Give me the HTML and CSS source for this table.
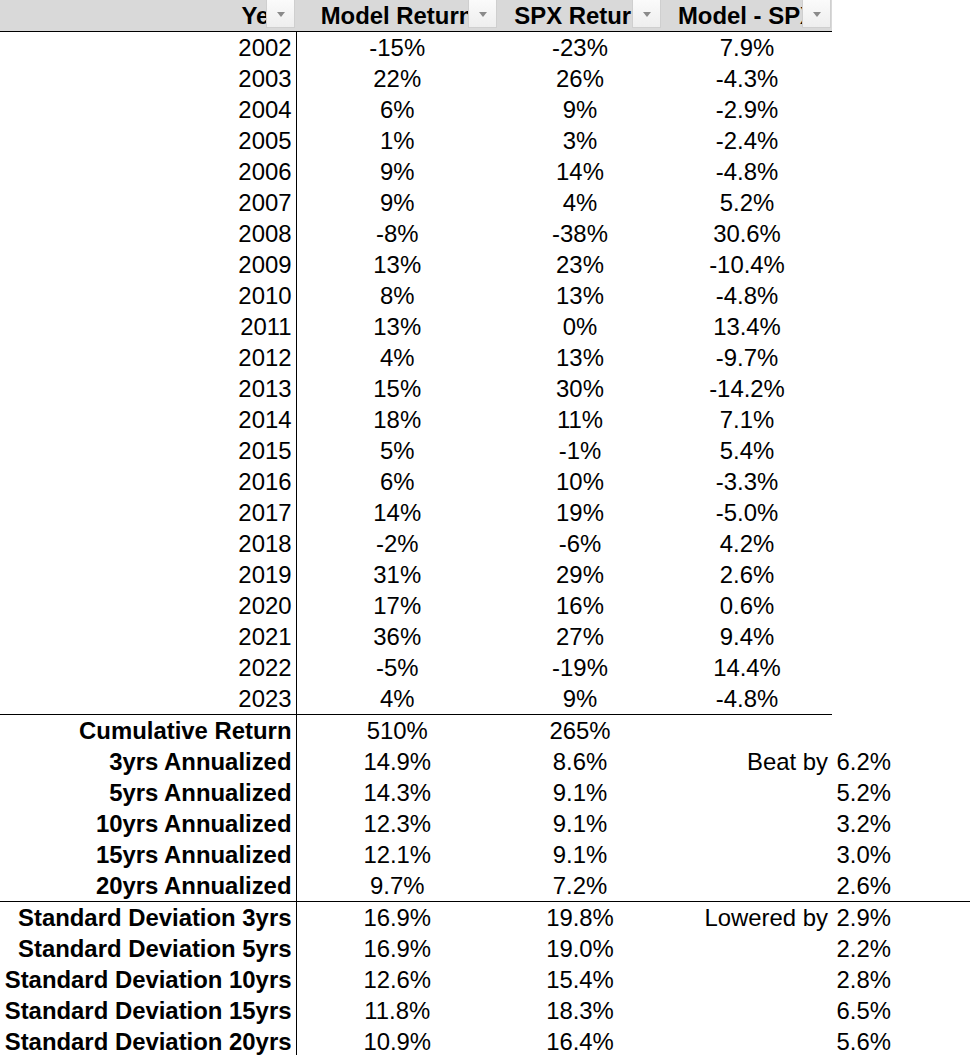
FILE: index.html
```html
<!DOCTYPE html>
<html lang="en">
<head>
  <meta charset="UTF-8">
  <title>Model vs SPX Returns</title>
  <link rel="stylesheet" href="styles.css">
</head>
<body>

<table class="sheet">
  <colgroup>
    <col class="c-a"><col class="c-b"><col class="c-c"><col class="c-d"><col class="c-e"><col class="c-f">
  </colgroup>
  <thead>
    <tr>
      <th class="h-year"><span class="htext">Year</span><span class="drop"></span></th>
      <th><span class="htext">Model Return</span><span class="drop"></span></th>
      <th><span class="htext">SPX Return</span><span class="drop"></span></th>
      <th><span class="htext">Model - SPX</span><span class="drop"></span></th>
      <th class="blank"></th>
      <th class="blank"></th>
    </tr>
  </thead>
  <tbody id="years"></tbody>
  <tbody class="summary">
    <tr><td class="label">Cumulative Return</td><td>510%</td><td>265%</td><td class="r"></td><td class="r"></td><td></td></tr>
    <tr><td class="label">3yrs Annualized</td><td>14.9%</td><td>8.6%</td><td class="r">Beat by</td><td class="r">6.2%</td><td></td></tr>
    <tr><td class="label">5yrs Annualized</td><td>14.3%</td><td>9.1%</td><td class="r"></td><td class="r">5.2%</td><td></td></tr>
    <tr><td class="label">10yrs Annualized</td><td>12.3%</td><td>9.1%</td><td class="r"></td><td class="r">3.2%</td><td></td></tr>
    <tr><td class="label">15yrs Annualized</td><td>12.1%</td><td>9.1%</td><td class="r"></td><td class="r">3.0%</td><td></td></tr>
    <tr class="last"><td class="label">20yrs Annualized</td><td>9.7%</td><td>7.2%</td><td class="r"></td><td class="r">2.6%</td><td></td></tr>
  </tbody>
  <tbody class="summary">
    <tr><td class="label">Standard Deviation 3yrs</td><td>16.9%</td><td>19.8%</td><td class="r">Lowered by</td><td class="r">2.9%</td><td></td></tr>
    <tr><td class="label">Standard Deviation 5yrs</td><td>16.9%</td><td>19.0%</td><td class="r"></td><td class="r">2.2%</td><td></td></tr>
    <tr><td class="label">Standard Deviation 10yrs</td><td>12.6%</td><td>15.4%</td><td class="r"></td><td class="r">2.8%</td><td></td></tr>
    <tr><td class="label">Standard Deviation 15yrs</td><td>11.8%</td><td>18.3%</td><td class="r"></td><td class="r">6.5%</td><td></td></tr>
    <tr><td class="label">Standard Deviation 20yrs</td><td>10.9%</td><td>16.4%</td><td class="r"></td><td class="r">5.6%</td><td></td></tr>
  </tbody>
</table>

<script>
  const rows = [
    [2002, "-15%", "-23%", "7.9%"],
    [2003, "22%", "26%", "-4.3%"],
    [2004, "6%", "9%", "-2.9%"],
    [2005, "1%", "3%", "-2.4%"],
    [2006, "9%", "14%", "-4.8%"],
    [2007, "9%", "4%", "5.2%"],
    [2008, "-8%", "-38%", "30.6%"],
    [2009, "13%", "23%", "-10.4%"],
    [2010, "8%", "13%", "-4.8%"],
    [2011, "13%", "0%", "13.4%"],
    [2012, "4%", "13%", "-9.7%"],
    [2013, "15%", "30%", "-14.2%"],
    [2014, "18%", "11%", "7.1%"],
    [2015, "5%", "-1%", "5.4%"],
    [2016, "6%", "10%", "-3.3%"],
    [2017, "14%", "19%", "-5.0%"],
    [2018, "-2%", "-6%", "4.2%"],
    [2019, "31%", "29%", "2.6%"],
    [2020, "17%", "16%", "0.6%"],
    [2021, "36%", "27%", "9.4%"],
    [2022, "-5%", "-19%", "14.4%"],
    [2023, "4%", "9%", "-4.8%"]
  ];

  const body = document.getElementById("years");
  rows.forEach(function(r, i) {
    const tr = document.createElement("tr");
    if (i === rows.length - 1) tr.className = "last";
    tr.innerHTML =
      '<td class="year">' + r[0] + '</td>' +
      '<td>' + r[1] + '</td>' +
      '<td>' + r[2] + '</td>' +
      '<td>' + r[3] + '</td>' +
      '<td class="out"></td><td class="out"></td>';
    body.appendChild(tr);
  });
</script>

</body>
</html>
```

FILE: styles.css
```css
body {
  margin: 0;
  padding: 0;
  background: #fff;
  color: #000;
  font-family: "Liberation Sans", Arial, sans-serif;
}
.sheet {
  border-collapse: collapse;
  table-layout: fixed;
  width: 970px;
  font-size: 23.9px;
}
.c-a { width: 296px; }
.c-b { width: 202px; }
.c-c { width: 164px; }
.c-d { width: 170px; }
.c-e { width: 63px; }
.c-f { width: 75px; }

th, td {
  height: 30px;
  padding: 1px 4px 0;
  line-height: 30px;
  white-space: nowrap;
  text-align: center;
}

/* header with filter buttons */
thead th {
  position: relative;
  overflow: hidden;
  background: #d9d9d9;
  font-weight: bold;
  border-bottom: 1px solid #000;
  padding: 1px 0 0;
}
thead th.blank {
  background: #fff;
  border-bottom: none;
}
.h-year { text-align: right; }
.h-year .htext { padding-right: 4px; }
.drop {
  position: absolute;
  top: 0;
  right: 1px;
  width: 29px;
  height: 28px;
  box-sizing: border-box;
  background: linear-gradient(#fbfbfb, #eeeeee);
  border: 1px solid #cfcfcf;
  border-top: none;
}
.drop::after {
  content: "";
  position: absolute;
  left: 10px;
  top: 12px;
  border-left: 4px solid transparent;
  border-right: 4px solid transparent;
  border-top: 5px solid #8a8a8a;
}

/* body cells */
tbody td:first-child {
  border-right: 1px solid #000;
  text-align: right;
}
.label { font-weight: bold; }
td.r { text-align: right; }

#years tr.last td {
  border-bottom: 1px solid #000;
}
#years tr.last td.out {
  border-bottom: none;
}
.summary tr.last td {
  border-bottom: 1px solid #000;
}
```
